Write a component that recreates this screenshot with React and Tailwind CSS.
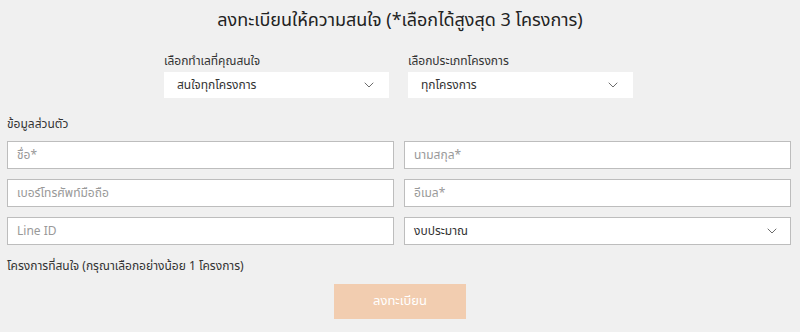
import { ChevronDown } from 'lucide-react';

const font = { fontFamily: '"Noto Sans Thai", "Noto Sans", "Liberation Sans", sans-serif' };

function SelectBox({ value, className = '' }) {
  return (
    <div className={`flex h-[26px] items-center justify-between bg-white pl-[13px] pr-[12px] text-[12px] text-[#333] ${className}`}>
      <span>{value}</span>
      <ChevronDown className="h-4 w-4 text-[#555]" strokeWidth={1.3} />
    </div>
  );
}

function Field({ placeholder, select = false }) {
  return (
    <div className="flex h-[28px] items-center justify-between border border-[#bdbdbd] bg-white pl-[9px] pr-[10px] text-[12px]">
      <span className={select ? 'text-[#333]' : 'text-[#999]'}>{placeholder}</span>
      {select && <ChevronDown className="h-4 w-4 text-[#555]" strokeWidth={1.3} />}
    </div>
  );
}

export default function App() {
  return (
    <div className="h-[332px] w-[800px] bg-[#f0f0f0] px-[7px] pt-[8px]" style={font}>
      <h1 className="text-center text-[18px] leading-[26px] text-[#222]">
        ลงทะเบียนให้ความสนใจ (*เลือกได้สูงสุด 3 โครงการ)
      </h1>

      <div className="ml-[157px] mt-[20px] flex gap-[19px]">
        <div className="w-[225px]">
          <div className="mb-[4px] text-[12px] leading-[14px] text-[#333]">เลือกทำเลที่คุณสนใจ</div>
          <SelectBox value="สนใจทุกโครงการ" />
        </div>
        <div className="w-[225px]">
          <div className="mb-[4px] text-[12px] leading-[14px] text-[#333]">เลือกประเภทโครงการ</div>
          <SelectBox value="ทุกโครงการ" />
        </div>
      </div>

      <div className="mt-[18px] text-[12px] leading-[16px] text-[#333]">ข้อมูลส่วนตัว</div>

      <div className="mt-[9px] grid w-[784px] grid-cols-2 gap-x-[10px] gap-y-[10px]">
        <Field placeholder="ชื่อ*" />
        <Field placeholder="นามสกุล*" />
        <Field placeholder="เบอร์โทรศัพท์มือถือ" />
        <Field placeholder="อีเมล*" />
        <Field placeholder="Line ID" />
        <Field placeholder="งบประมาณ" select />
      </div>

      <div className="mt-[13px] text-[12px] leading-[16px] text-[#333]">
        โครงการที่สนใจ (กรุณาเลือกอย่างน้อย 1 โครงการ)
      </div>

      <div className="mt-[10px] flex justify-center">
        <button
          type="button"
          className="h-[35px] w-[132px] bg-[#f2cdb0] text-[13px] text-white"
        >
          ลงทะเบียน
        </button>
      </div>
    </div>
  );
}
